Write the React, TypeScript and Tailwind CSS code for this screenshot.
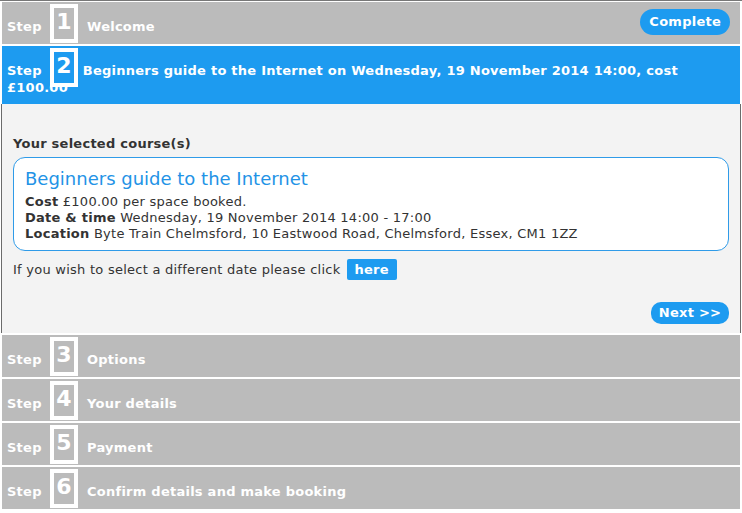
import React from 'react';

const font = { fontFamily: '"DejaVu Sans", Verdana, sans-serif' };

const NumBox: React.FC<{ n: number }> = ({ n }) => (
  <span className="inline-flex items-start justify-center w-[28px] h-[39px] border-[4px] border-white text-white font-bold text-[22px] leading-[28px] tracking-normal align-top">
    {n}
  </span>
);

const StepRow: React.FC<{ n: number; title: string; right?: React.ReactNode }> = ({ n, title, right }) => (
  <div className="mx-[2px] mb-[2px] h-[42px] bg-[#bbbbbb] flex items-start pt-[2px] pr-[10px]">
    <span className="w-[48px] pl-[5px] pt-[14px] text-white font-bold text-[13px] leading-[17px]">Step</span>
    <NumBox n={n} />
    <span className="ml-[9px] pt-[14px] text-white font-bold text-[13px] leading-[17px] flex-1">{title}</span>
    {right}
  </div>
);

export default function App() {
  return (
    <div className="w-[742px] h-[513px] bg-white border-t border-[#777777] pt-[1px] overflow-hidden tracking-[0.25px]" style={font}>
      <StepRow
        n={1}
        title="Welcome"
        right={
          <button className="mt-[5px] h-[26px] px-[9px] rounded-[13px] bg-[#1d9bf0] text-white font-bold text-[13px] leading-[26px]">
            Complete
          </button>
        }
      />

      <div className="mx-[2px] h-[58px] bg-[#1d9bf0] relative pt-[16px] pl-[5px] pr-[10px] text-white font-bold text-[13px] leading-[17px]">
        <span className="absolute left-[48px] top-[2px]">
          <NumBox n={2} />
        </span>
        <span className="inline-block w-[43px]">Step</span>
        <span className="inline-block w-[28px]"></span>{' '}
        Beginners guide to the Internet on Wednesday, 19 November 2014 14:00, cost
        <br />
        £100.00
      </div>

      <div className="mx-[1px] h-[229px] bg-[#f3f3f3] border-x border-[#6b6b6b] pt-[32px] px-[11px] text-[13px] leading-[16px] text-[#333333]">
        <div className="font-bold">Your selected course(s)</div>
        <div className="mt-[5px] bg-white border border-[#2f9be8] rounded-[12px] px-[11px] pt-[10px] pb-[8px]">
          <div className="text-[18px] leading-[22px] tracking-normal text-[#2393e6] mb-[4px]">Beginners guide to the Internet</div>
          <div><span className="font-bold">Cost</span> £100.00 per space booked.</div>
          <div><span className="font-bold">Date &amp; time</span> Wednesday, 19 November 2014 14:00 - 17:00</div>
          <div><span className="font-bold">Location</span> Byte Train Chelmsford, 10 Eastwood Road, Chelmsford, Essex, CM1 1ZZ</div>
        </div>
        <div className="mt-[8px] flex items-center">
          <span>If you wish to select a different date please click</span>
          <span className="ml-[6px] h-[21px] px-[8px] bg-[#1d9bf0] rounded-[2px] text-white font-bold leading-[21px]">here</span>
        </div>
        <div className="mt-[22px] flex justify-end">
          <span className="h-[22px] w-[78px] rounded-[10px] bg-[#1d9bf0] text-white font-bold text-center leading-[22px]">Next &gt;&gt;</span>
        </div>
      </div>

      <div className="h-[2px]" />
      <StepRow n={3} title="Options" />
      <StepRow n={4} title="Your details" />
      <StepRow n={5} title="Payment" />
      <StepRow n={6} title="Confirm details and make booking" />
    </div>
  );
}
